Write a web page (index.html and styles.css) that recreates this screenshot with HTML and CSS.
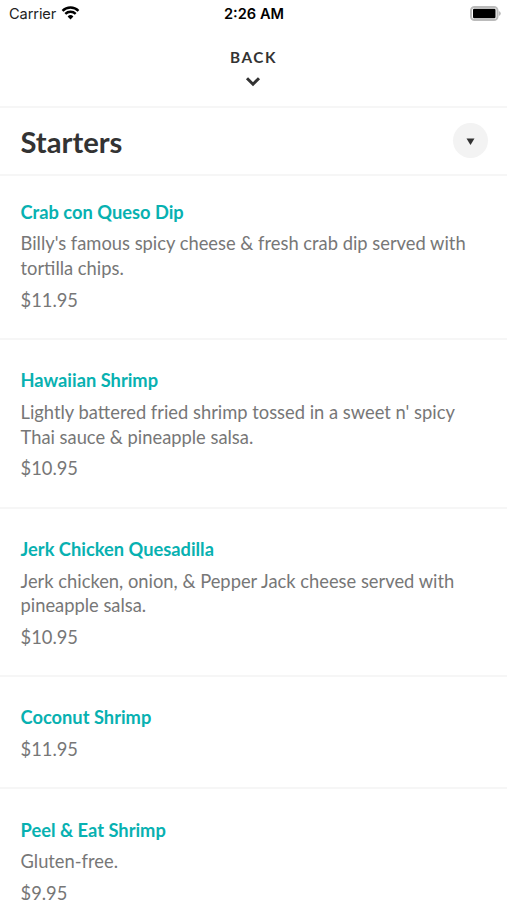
FILE: index.html
```html
<!DOCTYPE html>
<html lang="en">
<head>
  <meta charset="UTF-8">
  <meta name="viewport" content="width=device-width, initial-scale=1.0">
  <title>Starters</title>
  <link rel="stylesheet" href="styles.css">
</head>
<body>
  <div class="status-bar">
    <div class="carrier">
      <span>Carrier</span>
      <svg width="19" height="14" viewBox="0 0 18 14">
        <path d="M1 4.8a11.5 11.5 0 0 1 16 0M3.8 7.9a7.5 7.5 0 0 1 10.4 0" fill="none" stroke="#000" stroke-width="2.4"/>
        <path d="M9 13.4l-2.9-3a4.1 4.1 0 0 1 5.8 0z"/>
      </svg>
    </div>
    <div class="time">2:26 AM</div>
    <div class="battery">
      <svg width="31" height="15" viewBox="0 0 31 15">
        <rect x="1" y="1" width="26.5" height="13" rx="3.5" fill="none" stroke="#bbb" stroke-width="2"/>
        <rect x="3" y="2.7" width="22.5" height="9.6" rx="1.2"/>
        <path d="M28.8 5q2 .8 2 2.5t-2 2.5z" fill="#bbb"/>
      </svg>
    </div>
  </div>

  <header class="back">
    <span>BACK</span>
    <svg width="16" height="10" viewBox="0 0 16 10">
      <path d="M2 1.2l6 6 6-6" fill="none" stroke="#333" stroke-width="3"/>
    </svg>
  </header>

  <div class="section-title">
    <h1>Starters</h1>
    <button aria-label="Choose section">
      <svg width="9" height="7" viewBox="0 0 9 7"><path d="M0.5 0.5h8L4.5 7z" fill="#333"/></svg>
    </button>
  </div>

  <ul class="menu">
    <li>
      <h2>Crab con Queso Dip</h2>
      <p>Billy's famous spicy cheese &amp; fresh crab dip served with tortilla chips.</p>
      <div class="price">$11.95</div>
    </li>
    <li>
      <h2>Hawaiian Shrimp</h2>
      <p>Lightly battered fried shrimp tossed in a sweet n' spicy Thai sauce &amp; pineapple salsa.</p>
      <div class="price">$10.95</div>
    </li>
    <li>
      <h2>Jerk Chicken Quesadilla</h2>
      <p>Jerk chicken, onion, &amp; Pepper Jack cheese served with pineapple salsa.</p>
      <div class="price">$10.95</div>
    </li>
    <li>
      <h2>Coconut Shrimp</h2>
      <div class="price">$11.95</div>
    </li>
    <li>
      <h2>Peel &amp; Eat Shrimp</h2>
      <p>Gluten-free.</p>
      <div class="price">$9.95</div>
    </li>
  </ul>
</body>
</html>
```
FILE: styles.css
```css
* {
  box-sizing: border-box;
}

body {
  margin: 0;
  height: 900px;
  overflow: hidden;
  background: #fff;
  font-family: Lato, sans-serif;
  color: #777;
}

svg {
  display: block;
}

.status-bar {
  display: grid;
  grid-template-columns: 1fr auto 1fr;
  align-items: center;
  height: 27px;
  padding: 0 6px 0 9px;
  font-family: Inter, sans-serif;
  font-size: 14.6px;
  color: #000;
}

.carrier {
  display: flex;
  align-items: center;
  gap: 5px;
  letter-spacing: -0.1px;
  color: #222;
}

.carrier svg {
  margin-top: -1px;
}

.time {
  margin-right: 2px;
  font-weight: 600;
}

.battery {
  justify-self: end;
}

.back {
  display: flex;
  flex-direction: column;
  align-items: center;
  height: 81px;
  padding-top: 20px;
  border-bottom: 2px solid #f6f6f6;
  font-size: 15.3px;
  line-height: 20px;
  font-weight: bold;
  letter-spacing: 1.6px;
  color: #333;
}

.back svg {
  margin: 10px 1px 0 0;
}

.section-title {
  display: flex;
  align-items: center;
  justify-content: space-between;
  height: 68px;
  padding: 0 19px 0 20.5px;
  border-bottom: 2px solid #f6f6f6;
}

h1 {
  margin: 0;
  font-size: 29.2px;
  color: #333;
}

.section-title button {
  display: flex;
  align-items: center;
  justify-content: center;
  width: 35px;
  height: 35px;
  margin-bottom: 1px;
  padding: 1px 0 0;
  border: none;
  border-radius: 50%;
  background: #f3f3f3;
}

.menu {
  margin: 0;
  padding: 0;
  list-style: none;
}

.menu li {
  padding: 28.2px 20.5px 25.7px;
  border-bottom: 2px solid #f6f6f6;
  font-size: 18.33px;
  line-height: 24.6px;
}

.menu li:first-child {
  padding-top: 23.5px;
}

h2 {
  margin: 0;
  font-size: 18.3px;
  line-height: 24.6px;
  color: #08b1b1;
}

.menu p {
  margin: 7.2px 0 0;
}

.price {
  margin-top: 7.2px;
}
```
